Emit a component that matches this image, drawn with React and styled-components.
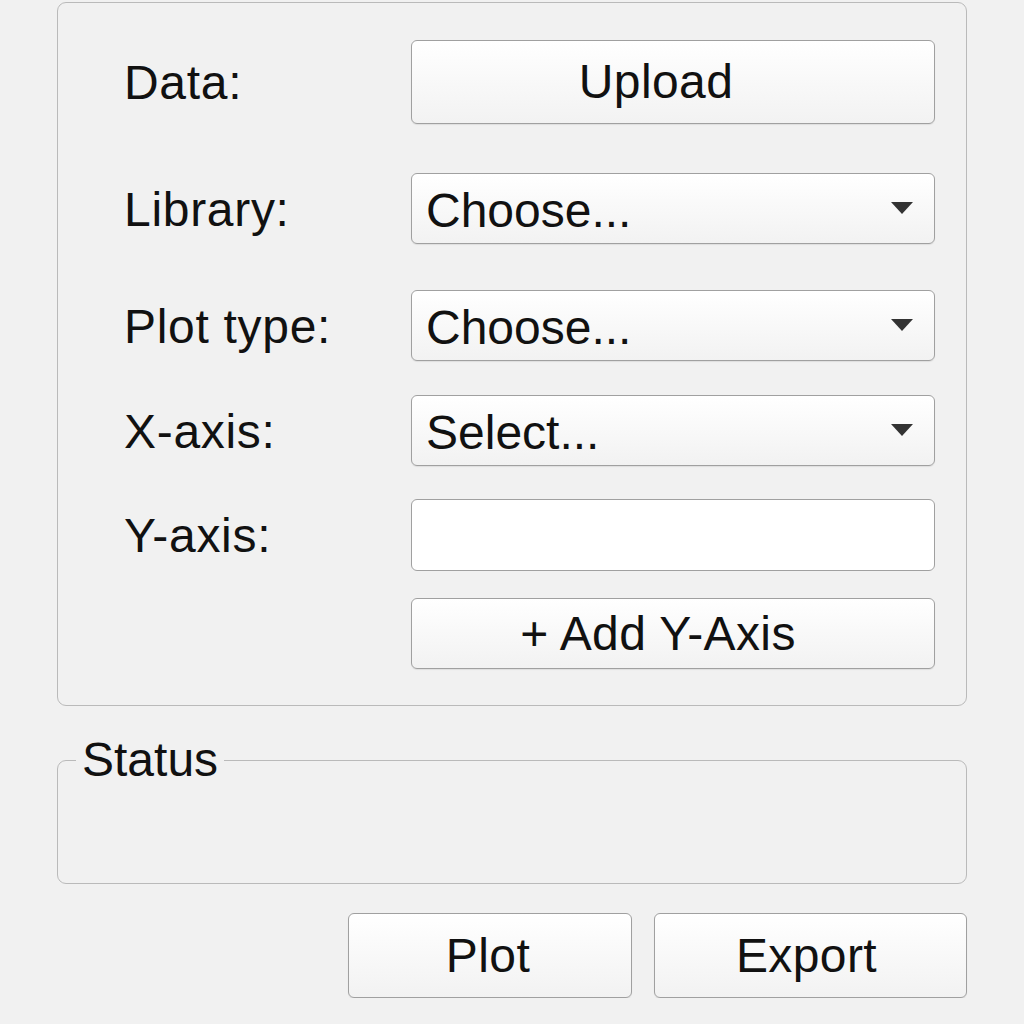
import React from "react"
import styled, {createGlobalStyle} from "styled-components"

const GlobalStyle = createGlobalStyle`
	html, body {
		margin: 0;
		padding: 0;
		background: #f1f1f1;
		font-family: "Liberation Sans", Arial, sans-serif;
		color: #111;
	}
`

const ROWS = [
	{label: "Data:", kind: "button", text: "Upload", gap: 0, h: 84},
	{label: "Library:", kind: "select", text: "Choose...", gap: 49, h: 71},
	{label: "Plot type:", kind: "select", text: "Choose...", gap: 46, h: 71},
	{label: "X-axis:", kind: "select", text: "Select...", gap: 34, h: 71},
	{label: "Y-axis:", kind: "input", gap: 33, h: 72},
]

const App = () => {
	return (
		<>
			<GlobalStyle/>
			<Page>
				<Panel>
					{ROWS.map(row => (
						<Row key={row.label} gap={row.gap}>
							<Label>{row.label}</Label>
							{row.kind === "button" && <Button h={row.h} shift={34}>{row.text}</Button>}
							{row.kind === "select" &&
								<Select h={row.h}>
									<span>{row.text}</span>
									<Caret viewBox="0 0 22 12"><path d="M0 0h22L11 12z"/></Caret>
								</Select>
							}
							{row.kind === "input" && <Input h={row.h}/>}
						</Row>
					))}
					<Row gap={27}>
						<Label/>
						<Button h={71} shift={30}>+ Add Y-Axis</Button>
					</Row>
				</Panel>
				<StatusBox>
					<legend>Status</legend>
				</StatusBox>
				<Actions>
					<Button h={85} w={284} shift={4}>Plot</Button>
					<Button h={85} w={313} shift={8}>Export</Button>
				</Actions>
			</Page>
		</>
	)
}

export default App

const Page = styled.div`
	width: 910px;
	margin-left: 57px;
	padding-top: 2px;
`

const Panel = styled.div`
	border: 1.5px solid #bababa;
	border-radius: 9px;
	padding: 37px 31px 36px 66px;
	display: flex;
	flex-direction: column;
`

const Row = styled.div`
	display: grid;
	grid-template-columns: 287px 1fr;
	align-items: center;
	margin-top: ${props => props.gap}px;
`

const Label = styled.div`
	font-size: 48px;
	line-height: 1;
	letter-spacing: 0.7px;
	padding-top: 2px;
`

const ctrl = `
	box-sizing: border-box;
	border: 1.5px solid #a0a0a0;
	border-radius: 6px;
	font-family: inherit;
	font-size: 48px;
	color: #111;
	box-shadow: 0 1px 1px rgba(0,0,0,0.08);
`

const Button = styled.button`
	${ctrl};
	height: ${props => props.h}px;
	width: ${props => props.w ? props.w + "px" : "100%"};
	background: linear-gradient(#ffffff, #f2f2f2);
	padding: 0 ${props => props.shift || 0}px 0 0;
	line-height: 1;
	letter-spacing: 0.4px;
`

const Select = styled.div`
	${ctrl};
	height: ${props => props.h}px;
	background: linear-gradient(#ffffff, #f2f2f2);
	display: flex;
	align-items: center;
	justify-content: space-between;
	padding: 0 21px 0 14px;
	& span {
		padding-top: 4px;
	}
`

const Caret = styled.svg`
	width: 22px;
	height: 12px;
	fill: #333;
	margin-top: -2px;
`

const Input = styled.div`
	${ctrl};
	height: ${props => props.h}px;
	background: #ffffff;
	box-shadow: none;
`

const StatusBox = styled.fieldset`
	margin: 30px 0 0;
	padding: 0 0 0 18px;
	height: 148px;
	box-sizing: border-box;
	border: 1.5px solid #bababa;
	border-radius: 9px;
	& legend {
		font-size: 48px;
		line-height: 1;
		padding: 0 6px;
	}
`

const Actions = styled.div`
	display: flex;
	justify-content: flex-end;
	gap: 22px;
	margin-top: 29px;
`
